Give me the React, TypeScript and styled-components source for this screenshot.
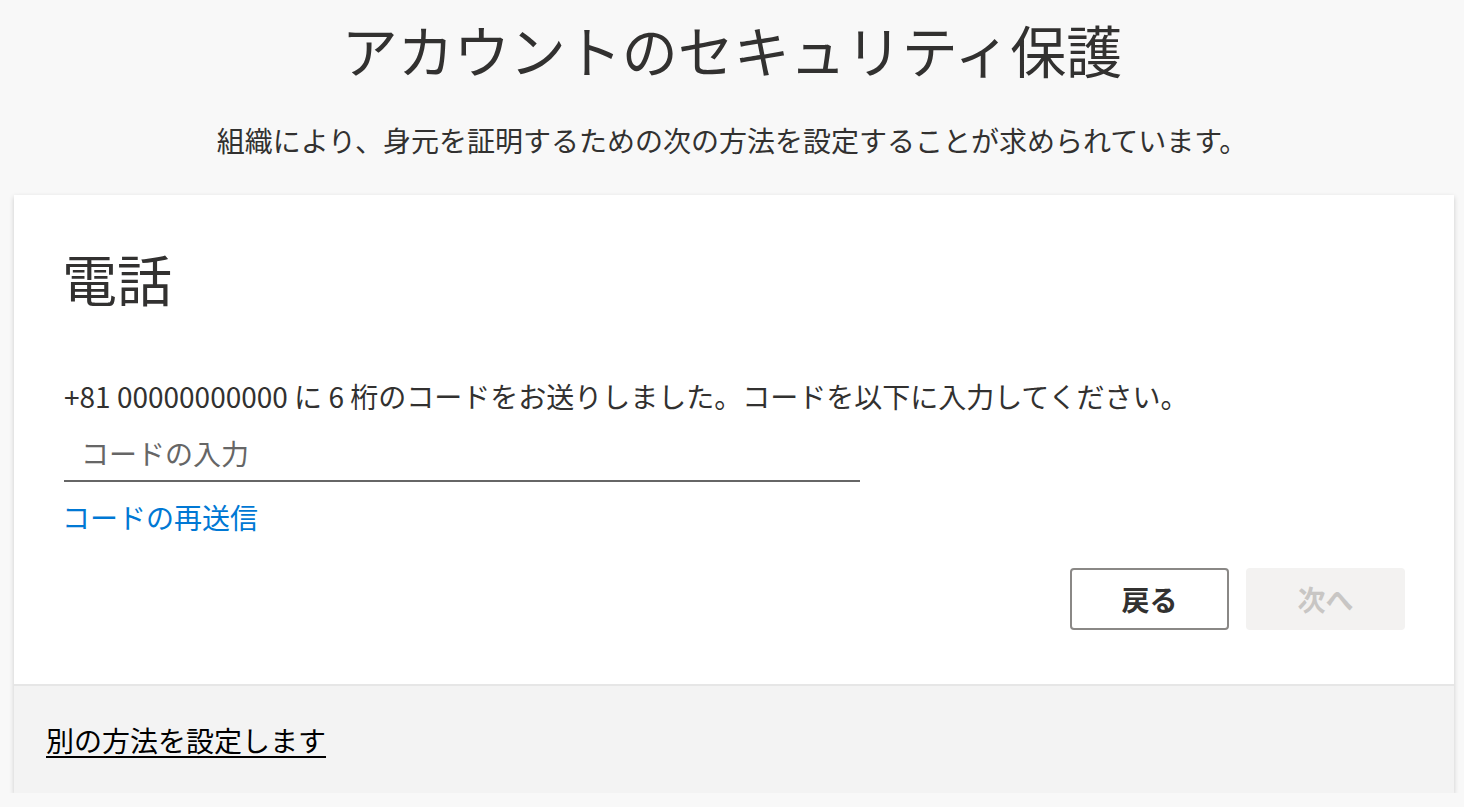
import React from "react";
import styled, { createGlobalStyle } from "styled-components";

const Global = createGlobalStyle`
  html, body { margin: 0; padding: 0; background: #f8f8f8; }
  body {
    font-family: "Noto Sans CJK JP", "Noto Sans", sans-serif;
    color: #323130;
  }
  * { box-sizing: border-box; }
`;

const Page = styled.div`
  display: flex;
  flex-direction: column;
  align-items: center;
  padding-top: 14px;
`;

const Title = styled.h1`
  margin: 0;
  font-size: 56px;
  line-height: 70px;
  font-weight: 400;
  color: #323130;
  text-align: center;
`;

const Subtitle = styled.p`
  margin: 36px 0 0;
  font-size: 28px;
  line-height: 40px;
  text-align: center;
`;

const Card = styled.section`
  align-self: stretch;
  margin: 35px 10px 0 14px;
  background: #fff;
  box-shadow: 0 2px 5px rgba(0, 0, 0, 0.18);
  display: flex;
  flex-direction: column;
`;

const Body = styled.div`
  padding: 47px 49px 54px 50px;
  display: flex;
  flex-direction: column;
`;

const Heading = styled.h2`
  margin: 0 0 0 -2px;
  font-size: 55px;
  line-height: 70px;
  font-weight: 400;
`;

const Info = styled.p`
  margin: 68px 0 0;
  font-size: 28px;
  line-height: 32px;
`;

const CodeInput = styled.input`
  margin-top: 14px;
  width: 796px;
  height: 56px;
  border: none;
  border-bottom: 2px solid #666;
  padding: 0 0 0 17px;
  font-family: inherit;
  font-size: 28px;
  color: #323130;
  background: transparent;
  outline: none;
  &::placeholder { color: #666; }
`;

const Resend = styled.a`
  margin: 17px 0 0 -2px;
  align-self: flex-start;
  font-size: 28px;
  line-height: 36px;
  color: #0078d4;
  text-decoration: none;
`;

const Actions = styled.div`
  margin-top: 33px;
  display: flex;
  justify-content: flex-end;
  gap: 17px;
`;

const Button = styled.button<{ $primary?: boolean }>`
  width: 159px;
  height: 62px;
  border-radius: 4px;
  font-family: inherit;
  font-size: 28px;
  font-weight: 700;
  border: ${(p) => (p.$primary ? "none" : "2px solid #8a8886")};
  background: ${(p) => (p.$primary ? "#f3f2f1" : "#fff")};
  color: ${(p) => (p.$primary ? "#c8c6c4" : "#323130")};
`;

const Footer = styled.div`
  background: #f3f3f3;
  border-top: 2px solid #e6e6e6;
  height: 109px;
  display: flex;
  align-items: center;
  padding-left: 32px;
`;

const FooterLink = styled.a`
  font-size: 28px;
  line-height: 36px;
  color: #000;
  text-decoration: underline;
  text-underline-offset: 4px;
  text-decoration-thickness: 2px;
`;

export default function App() {
  return (
    <>
      <Global />
      <Page>
        <Title>アカウントのセキュリティ保護</Title>
        <Subtitle>組織により、身元を証明するための次の方法を設定することが求められています。</Subtitle>
        <Card>
          <Body>
            <Heading>電話</Heading>
            <Info>+81 00000000000 に 6 桁のコードをお送りしました。コードを以下に入力してください。</Info>
            <CodeInput placeholder="コードの入力" />
            <Resend href="#">コードの再送信</Resend>
            <Actions>
              <Button>戻る</Button>
              <Button $primary disabled>次へ</Button>
            </Actions>
          </Body>
          <Footer>
            <FooterLink href="#">別の方法を設定します</FooterLink>
          </Footer>
        </Card>
      </Page>
    </>
  );
}
